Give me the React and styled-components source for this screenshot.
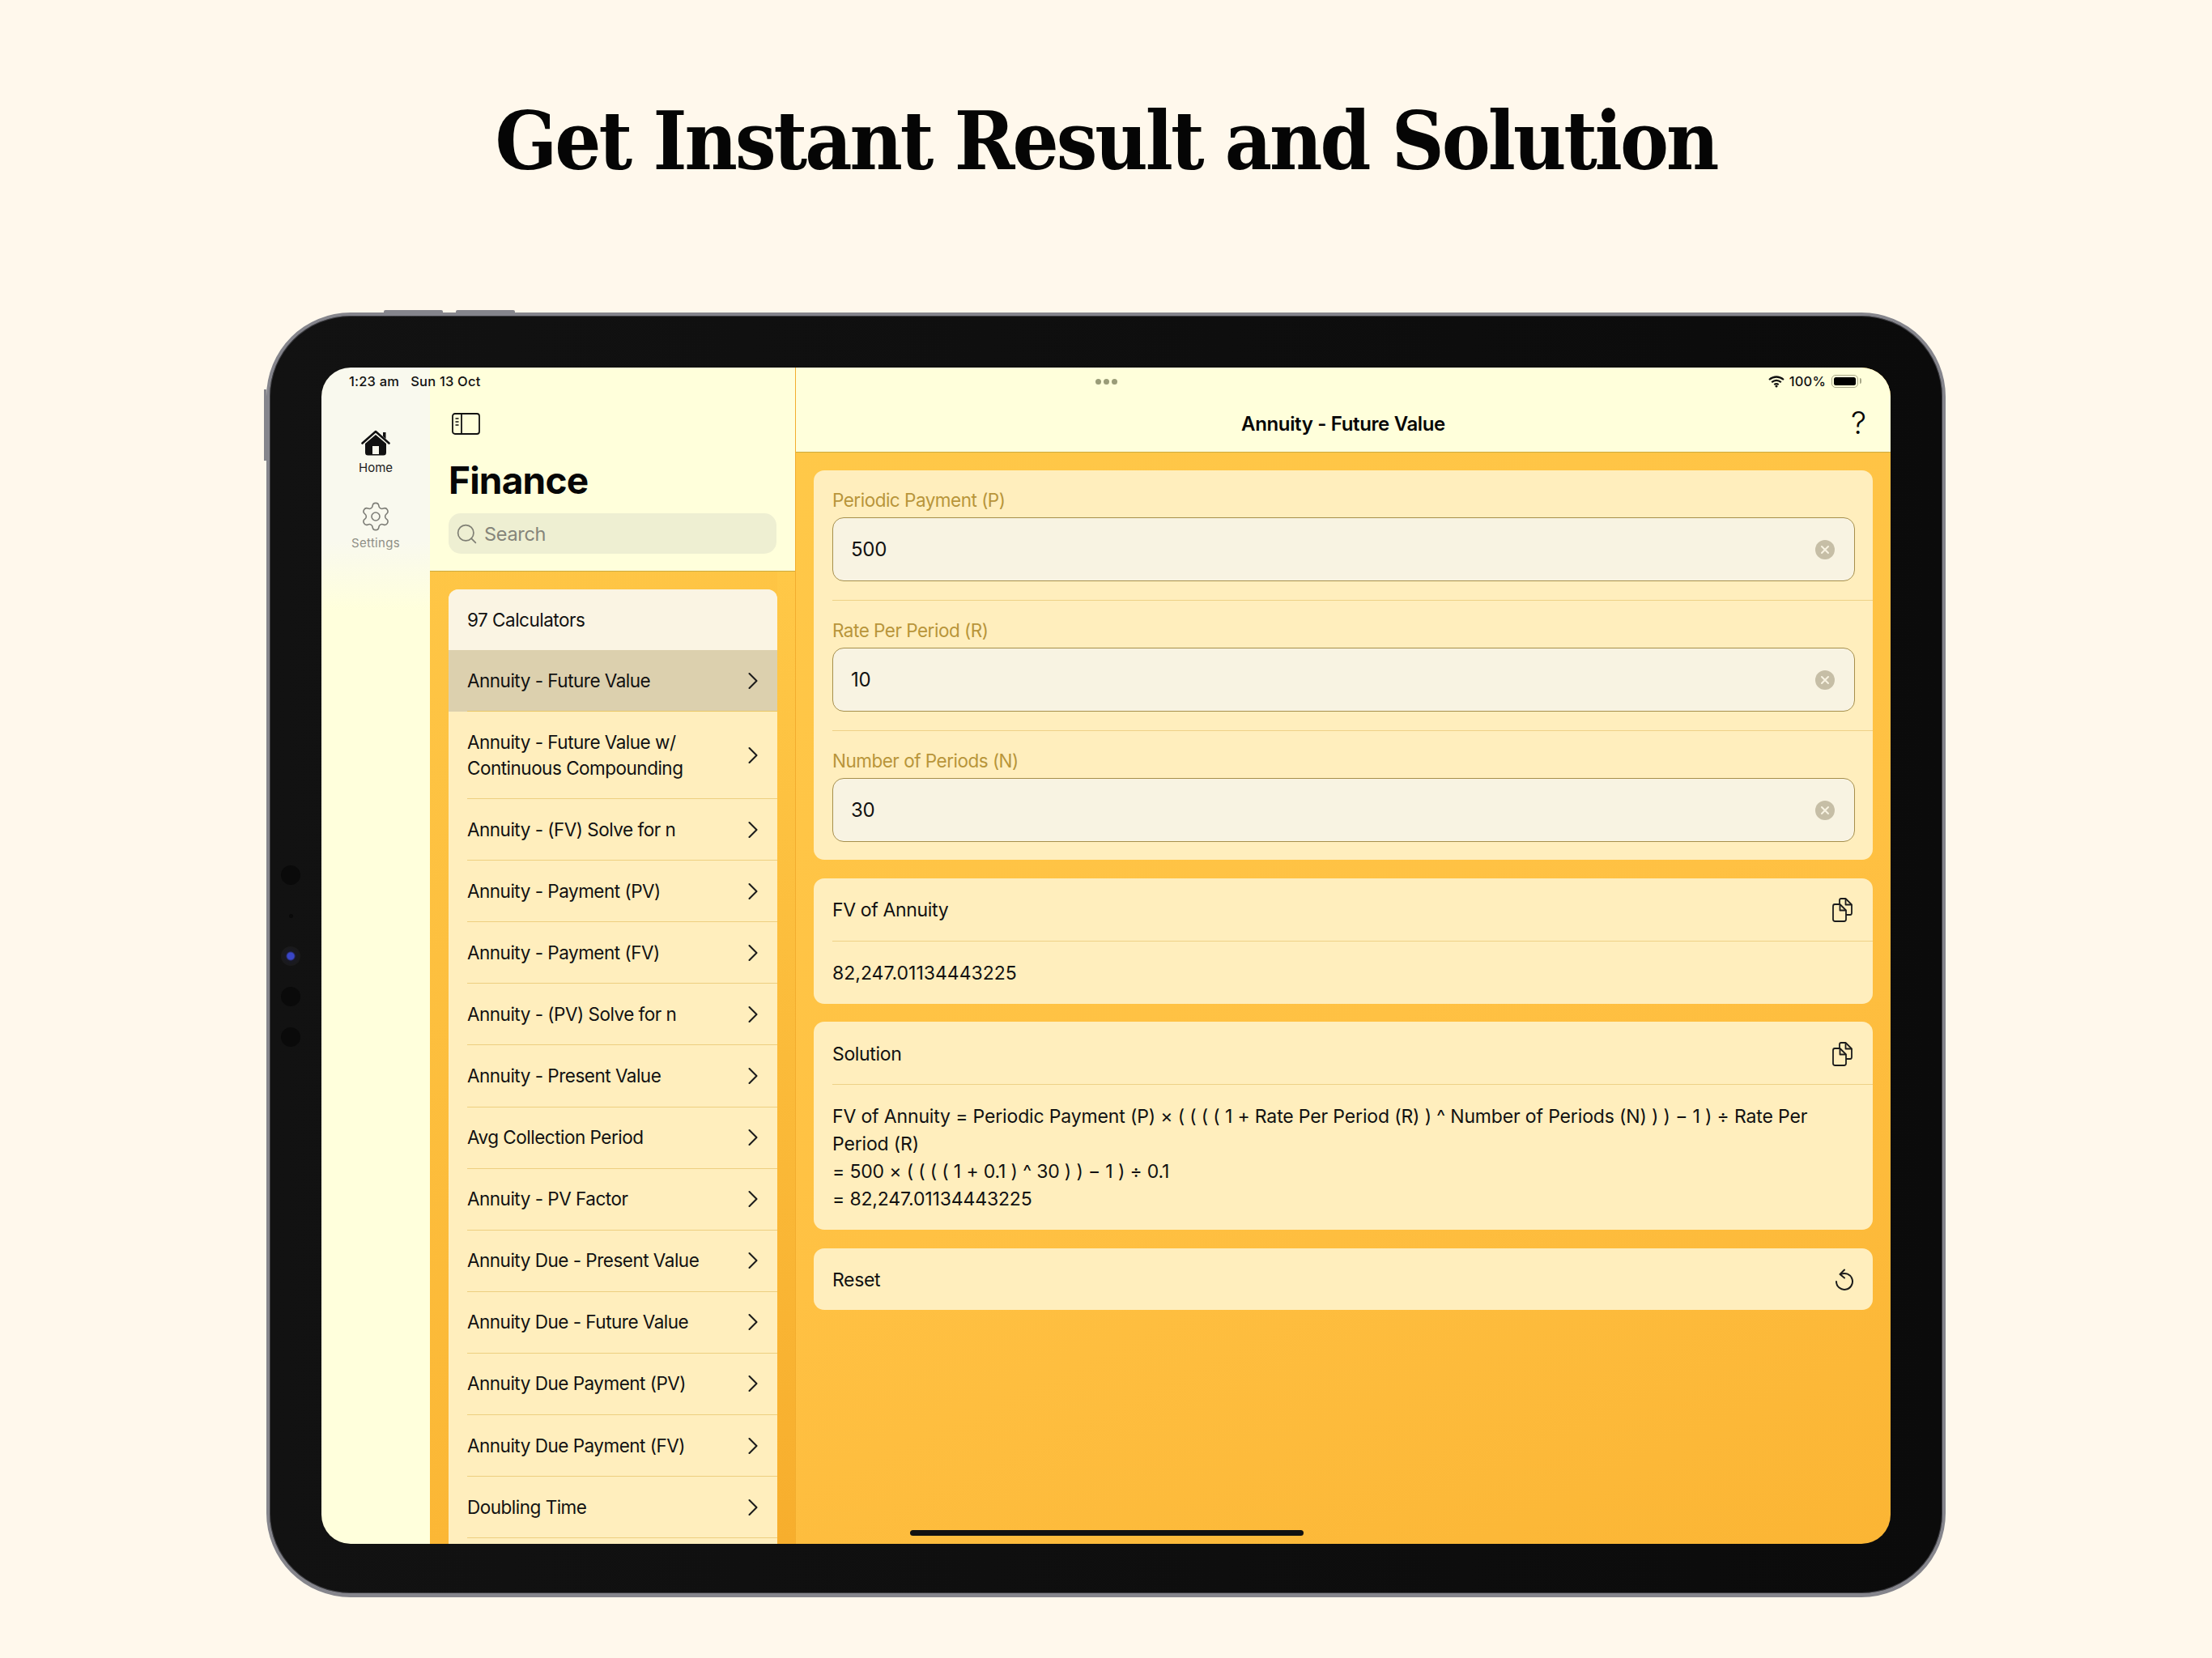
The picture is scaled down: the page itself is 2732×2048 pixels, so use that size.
import React from 'react'
import styled, { createGlobalStyle } from 'styled-components'
import { Search as SearchIcon, Settings as GearIcon } from 'lucide-react'

const Global = createGlobalStyle`
    html, body { margin: 0; background: #fff8ec; }
    * { box-sizing: border-box; }
    body { font-family: Inter, "Liberation Sans", sans-serif; color: #111; }
`

const Page = styled.div`
    width: 2732px;
    height: 2048px;
    overflow: hidden;
    display: flex;
    flex-direction: column;
    align-items: center;
    background: #fff8ec;
`
const Heading = styled.h1`
    margin: 0;
    height: 386px;
    padding-top: 109px;
    font-family: "DejaVu Serif", serif;
    font-stretch: condensed;
    font-weight: 700;
    font-size: 100px;
    line-height: 130px;
    letter-spacing: -3px;
    white-space: nowrap;
    color: #050505;
`
const Device = styled.div`
    position: relative;
    width: 2074px;
    height: 1587px;
    padding: 64px 64px 61px;
    border: 4px solid #85858c;
    border-bottom-width: 5px;
    border-radius: 104px;
    background: linear-gradient(90deg, #121212, #0b0b0b);
    box-shadow: inset 0 0 0 1px #3c3c40;
`
const HardButton = styled.span`
    position: absolute;
    top: -7px;
    left: ${p => p.$left}px;
    width: 73px;
    height: 3px;
    border-radius: 2px 2px 0 0;
    background: #85858c;
`
const SideButton = styled.span`
    position: absolute;
    left: -7px;
    top: 91px;
    width: 3px;
    height: 88px;
    background: #85858c;
`
const CameraBar = styled.div`
    position: absolute;
    left: 14px;
    top: 679px;
    width: 24px;
    display: flex;
    flex-direction: column;
    align-items: center;
    gap: 26px;
`
const Sensor = styled.span`
    width: ${p => (p.$tiny ? 5 : 24)}px;
    height: ${p => (p.$tiny ? 5 : 24)}px;
    margin: ${p => (p.$tiny ? '9.5px 0' : '0')};
    border-radius: 50%;
    background: ${p => (p.$lens ? 'radial-gradient(circle, #3a46c8 0 4px, #191924 6px, #1a1a1a 12px)' : '#0a0a0a')};
`
const Screen = styled.div`
    position: relative;
    display: flex;
    width: 100%;
    height: 100%;
    border-radius: 36px;
    overflow: hidden;
`
const StatusBar = styled.div`
    position: absolute;
    top: 0;
    left: 0;
    right: 0;
    height: 34px;
    padding: 0 34px;
    display: grid;
    grid-template-columns: 1fr auto 1fr;
    align-items: center;
    font-size: 16.5px;
    font-weight: 500;
    letter-spacing: 0.2px;
    color: #111;
`
const StatusLeft = styled.div`
    display: flex;
    gap: 14px;
`
const StatusRight = styled.div`
    display: flex;
    justify-content: flex-end;
    align-items: center;
    gap: 6px;
`
const Dots = styled.div`
    display: flex;
    gap: 3px;
    span {
        width: 7px;
        height: 7px;
        border-radius: 50%;
        background: #9a9c78;
    }
`
const Battery = styled.div`
    position: relative;
    width: 33px;
    height: 16px;
    margin: 0 6px 0 1px;
    padding: 2px;
    border: 1.5px solid #a8a888;
    border-radius: 5px;
    &::before {
        content: '';
        display: block;
        height: 100%;
        border-radius: 2.5px;
        background: #000;
    }
    &::after {
        content: '';
        position: absolute;
        right: -5px;
        top: 3px;
        width: 2px;
        height: 7px;
        border-radius: 0 2px 2px 0;
        background: #a8a888;
    }
`
const Rail = styled.nav`
    flex: 0 0 134px;
    padding-top: 77px;
    display: flex;
    flex-direction: column;
    align-items: center;
    background: linear-gradient(#f9f9ee 0, #f9f9ee 215px, #ffffdc 300px);
`
const RailItem = styled.div`
    height: ${p => (p.$muted ? 80 : 87)}px;
    display: flex;
    flex-direction: column;
    align-items: center;
    gap: ${p => (p.$muted ? 3 : 5)}px;
    font-size: 15px;
    letter-spacing: ${p => (p.$muted ? 0.3 : 0)}px;
    color: ${p => (p.$muted ? '#8f8f86' : '#1b1b1b')};
`
const Sidebar = styled.aside`
    flex: 0 0 452px;
    display: flex;
    flex-direction: column;
    background: linear-gradient(170deg, #ffc949, #fbb634);
    border-right: 1px solid #f3ad2e;
`
const SideHead = styled.header`
    height: 252px;
    flex: none;
    padding: 56px 23px 0;
    background: #ffffdb;
    border-bottom: 1.5px solid #cdab3e;
`
const ToggleButton = styled.div`
    height: 27px;
    padding-left: 4px;
    display: flex;
`
const LargeTitle = styled.h2`
    margin: 27px 0 0;
    height: 58px;
    font-size: 46px;
    line-height: 58px;
    font-weight: 700;
    letter-spacing: -0.8px;
    color: #060606;
`
const SearchField = styled.div`
    margin-top: 12px;
    height: 50px;
    padding: 0 8px;
    display: flex;
    align-items: center;
    gap: 7px;
    border-radius: 15px;
    background: #eeefd2;
    font-size: 23.5px;
    letter-spacing: -0.3px;
    color: #85857a;
`
const SideBody = styled.div`
    flex: 1;
    min-height: 0;
    padding: 22px 22px 0 23px;
    display: flex;
    flex-direction: column;
    overflow: hidden;
    background: linear-gradient(#ffc847, #f7ae2d) right / 22px 100% no-repeat;
`
const List = styled.div`
    flex: 1;
    border-radius: 12px 12px 0 0;
    overflow: hidden;
    background: #ffeebd;
`
const ListHead = styled.div`
    height: 75px;
    padding: 0 0 1px 23px;
    display: flex;
    align-items: center;
    background: #faf4e3;
    font-size: 22.5px;
    letter-spacing: -0.5px;
`
const Row = styled.div`
    height: ${p => (p.$tall ? 108 : 76.1)}px;
    padding-left: 23px;
    background: ${p => (p.$active ? '#dcd0ae' : 'transparent')};
`
const RowInner = styled.div`
    height: 100%;
    padding-right: 23px;
    display: flex;
    align-items: center;
    justify-content: space-between;
    border-bottom: 1.5px solid ${p => (p.$active ? '#e8c766' : '#edcf80')};
    font-size: 22.5px;
    line-height: 32px;
    letter-spacing: -0.5px;
`
const Detail = styled.main`
    flex: 1;
    min-width: 0;
    display: flex;
    flex-direction: column;
    background: linear-gradient(155deg, #ffc949 0%, #ffc143 55%, #fbb534 100%);
`
const NavBar = styled.header`
    position: relative;
    height: 105px;
    flex: none;
    padding-top: 34px;
    display: flex;
    align-items: center;
    justify-content: center;
    background: #ffffdb;
    border-bottom: 1.5px solid #cdab3e;
    font-size: 24px;
    font-weight: 600;
    letter-spacing: -0.35px;
    color: #060606;
`
const HelpMark = styled.span`
    position: absolute;
    right: 30px;
    top: 46px;
    font-size: 38px;
    line-height: 44px;
    font-weight: 300;
    letter-spacing: 0;
`
const Content = styled.div`
    padding: 22px 22px 0 22px;
    display: flex;
    flex-direction: column;
    gap: 22.5px;
`
const Card = styled.section`
    border-radius: 13px;
    background: #ffeebd;
`
const Field = styled.div`
    height: ${p => (p.$last ? 159 : 161)}px;
    margin-left: 23px;
    padding: 25px 22px 0 0;
    border-bottom: ${p => (p.$last ? 'none' : '1.5px solid #eed187')};
`
const FieldLabel = styled.div`
    height: 24px;
    margin-bottom: 9px;
    font-size: 22.5px;
    line-height: 24px;
    letter-spacing: -0.5px;
    color: #b8953a;
`
const InputBox = styled.div`
    height: 79px;
    padding: 0 24px 0 22px;
    display: flex;
    align-items: center;
    justify-content: space-between;
    border: 1.5px solid #a68f4c;
    border-radius: 14px;
    background: #f8f3e2;
    font-size: 24px;
    letter-spacing: -0.3px;
`
const ClearButton = styled.span`
    width: 24px;
    height: 24px;
    display: flex;
    align-items: center;
    justify-content: center;
    border-radius: 50%;
    background: #c6bea6;
`
const CardRow = styled.div`
    height: ${p => p.$h}px;
    margin-left: 23px;
    padding: 2px 25px 0 0;
    display: flex;
    align-items: center;
    justify-content: space-between;
    font-size: 23px;
    letter-spacing: -0.35px;
    border-bottom: ${p => (p.$rule ? '1.5px solid #eed187' : 'none')};
`
const ResultValue = styled.span`
    letter-spacing: 0;
`
const SolutionText = styled.div`
    margin-left: 23px;
    padding: 22px 25px 21px 0;
    font-size: 23px;
    line-height: 34px;
    letter-spacing: -0.15px;
    white-space: nowrap;
`
const ResetMark = styled.svg`
    margin-right: -2px;
`
const HomeBar = styled.div`
    position: absolute;
    left: 727px;
    bottom: 10px;
    width: 486px;
    height: 7px;
    border-radius: 4px;
    background: #111;
`

const calculators = [
    'Annuity - (FV) Solve for n',
    'Annuity - Payment (PV)',
    'Annuity - Payment (FV)',
    'Annuity - (PV) Solve for n',
    'Annuity - Present Value',
    'Avg Collection Period',
    'Annuity - PV Factor',
    'Annuity Due - Present Value',
    'Annuity Due - Future Value',
    'Annuity Due Payment (PV)',
    'Annuity Due Payment (FV)',
    'Doubling Time',
]

const Chevron = () => (
    <svg width="14" height="22" viewBox="0 0 14 22" fill="none" stroke="#1a1a1a" strokeWidth="2.1" strokeLinecap="round" strokeLinejoin="round">
        <path d="M2.5 2 L11.5 11 L2.5 20" />
    </svg>
)

const HomeGlyph = () => (
    <svg width="36" height="32" viewBox="0 0 36 32" fill="#111">
        <path d="M1.5 16.5 L18 2 L34.5 16.5" fill="none" stroke="#111" strokeWidth="2.6" strokeLinecap="round" strokeLinejoin="round" />
        <path d="M27 3 h3.5 v8 L27 8 Z" />
        <path fillRule="evenodd" d="M18 6 L31 17 V28 Q31 31.5 27.5 31.5 H8.5 Q5 31.5 5 28 V17 Z M14 20 V30 H22 V20 Z" />
    </svg>
)

const PanelGlyph = () => (
    <svg width="35" height="27" viewBox="0 0 35 27" fill="none" stroke="#111" strokeWidth="1.8">
        <rect x="1" y="1" width="33" height="25" rx="3" />
        <path d="M12 1 V26" />
        <path d="M4.5 7 H8.5 M4.5 11 H8.5 M4.5 15 H8.5" strokeWidth="1.5" />
    </svg>
)

const WifiGlyph = () => (
    <svg width="20" height="15" viewBox="0 0 20 15" fill="none" stroke="#111" strokeWidth="2.2" strokeLinecap="butt">
        <path d="M1 5 Q10 -2 19 5" />
        <path d="M4.2 8.2 Q10 3.6 15.8 8.2" />
        <path d="M7.3 11.2 Q10 9.2 12.7 11.2" />
        <circle cx="10" cy="13.2" r="1.4" fill="#111" stroke="none" />
    </svg>
)

const CloseGlyph = () => (
    <svg width="12" height="12" viewBox="0 0 12 12" stroke="#f8f3e2" strokeWidth="2" strokeLinecap="round">
        <path d="M2 2 L10 10 M10 2 L2 10" />
    </svg>
)

const CopyGlyph = () => (
    <svg width="25" height="30" viewBox="0 0 25 30" fill="none" stroke="#1c1c1c" strokeWidth="1.8" strokeLinejoin="round">
        <path d="M9 7 V3 Q9 1 11 1 H16.5 L24 8.5 V19 Q24 21 22 21 H17" />
        <path d="M16.5 1 V8.5 H24" />
        <path d="M3 8 H9.5 L17 15.5 V26.5 Q17 29 14.5 29 H3.5 Q1 29 1 26.5 V10.5 Q1 8 3 8 Z" />
        <path d="M9.5 8 V15.5 H17" />
    </svg>
)

const ResetGlyph = () => (
    <ResetMark width="24" height="28" viewBox="0 0 24 28" fill="none" stroke="#1c1c1c" strokeWidth="2" strokeLinecap="round" strokeLinejoin="round">
        <path d="M7.5 7 A10 10 0 1 1 2 16" />
        <path d="M12 1.5 L6.5 7 L12 11.5" />
    </ResetMark>
)

const inputs = [
    { label: 'Periodic Payment (P)', value: '500' },
    { label: 'Rate Per Period (R)', value: '10' },
    { label: 'Number of Periods (N)', value: '30' },
]

export default function App() {
    return (
        <Page>
            <Global />
            <Heading>Get Instant Result and Solution</Heading>
            <Device>
                <HardButton $left={141} />
                <HardButton $left={230} />
                <SideButton />
                <CameraBar>
                    <Sensor />
                    <Sensor $tiny />
                    <Sensor $lens />
                    <Sensor />
                    <Sensor />
                </CameraBar>
                <Screen>
                    <Rail>
                        <RailItem>
                            <HomeGlyph />
                            Home
                        </RailItem>
                        <RailItem $muted>
                            <GearIcon size={40} strokeWidth={0.95} color="#7d7d76" />
                            Settings
                        </RailItem>
                    </Rail>
                    <Sidebar>
                        <SideHead>
                            <ToggleButton><PanelGlyph /></ToggleButton>
                            <LargeTitle>Finance</LargeTitle>
                            <SearchField>
                                <SearchIcon size={29} strokeWidth={1.4} color="#7f7f74" />
                                Search
                            </SearchField>
                        </SideHead>
                        <SideBody>
                            <List>
                                <ListHead>97 Calculators</ListHead>
                                <Row $active>
                                    <RowInner $active>Annuity - Future Value<Chevron /></RowInner>
                                </Row>
                                <Row $tall>
                                    <RowInner>
                                        <span>Annuity - Future Value w/<br />Continuous Compounding</span>
                                        <Chevron />
                                    </RowInner>
                                </Row>
                                {calculators.map(name => (
                                    <Row key={name}>
                                        <RowInner>{name}<Chevron /></RowInner>
                                    </Row>
                                ))}
                            </List>
                        </SideBody>
                    </Sidebar>
                    <Detail>
                        <NavBar>
                            Annuity - Future Value
                            <HelpMark>?</HelpMark>
                        </NavBar>
                        <Content>
                            <Card>
                                {inputs.map((f, i) => (
                                    <Field key={f.label} $last={i === inputs.length - 1}>
                                        <FieldLabel>{f.label}</FieldLabel>
                                        <InputBox>
                                            {f.value}
                                            <ClearButton><CloseGlyph /></ClearButton>
                                        </InputBox>
                                    </Field>
                                ))}
                            </Card>
                            <Card>
                                <CardRow $h={78} $rule>FV of Annuity<CopyGlyph /></CardRow>
                                <CardRow $h={77}><ResultValue>82,247.01134443225</ResultValue></CardRow>
                            </Card>
                            <Card>
                                <CardRow $h={78} $rule>Solution<CopyGlyph /></CardRow>
                                <SolutionText>
                                    FV of Annuity = Periodic Payment (P) × ( ( ( ( 1 + Rate Per Period (R) ) ^ Number of Periods (N) ) ) − 1 ) ÷ Rate Per<br />
                                    Period (R)<br />
                                    = 500 × ( ( ( ( 1 + 0.1 ) ^ 30 ) ) − 1 ) ÷ 0.1<br />
                                    = 82,247.01134443225
                                </SolutionText>
                            </Card>
                            <Card>
                                <CardRow $h={76}>Reset<ResetGlyph /></CardRow>
                            </Card>
                        </Content>
                    </Detail>
                    <StatusBar>
                        <StatusLeft><span>1:23 am</span><span>Sun 13 Oct</span></StatusLeft>
                        <Dots><span /><span /><span /></Dots>
                        <StatusRight><WifiGlyph />100%<Battery /></StatusRight>
                    </StatusBar>
                    <HomeBar />
                </Screen>
            </Device>
        </Page>
    )
}
